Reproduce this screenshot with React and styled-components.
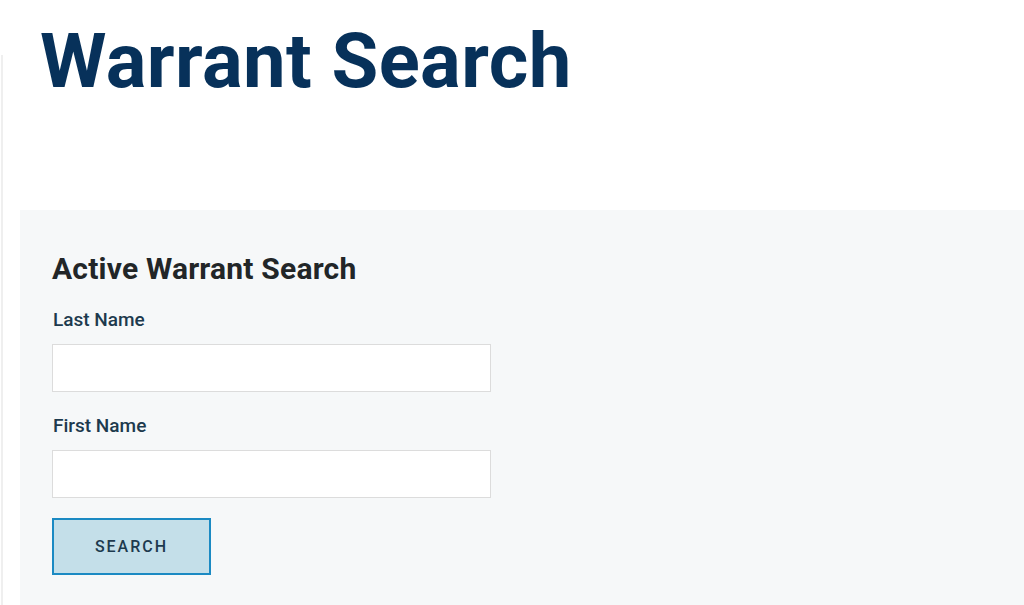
import React from 'react';
import styled, { createGlobalStyle } from 'styled-components';

const GlobalStyle = createGlobalStyle`
  html, body {
    margin: 0;
    padding: 0;
    background: #ffffff;
    font-family: "Roboto", "Liberation Sans", sans-serif;
  }
  * { box-sizing: border-box; }
`;

// Layout
const Page = styled.div`
  width: 1024px;
  height: 605px;
  overflow: hidden;
  position: relative;
  padding-left: 20px;
`;

const Rail = styled.div`
  position: absolute;
  left: 1px;
  top: 55px;
  bottom: 0;
  width: 2px;
  background: #efefef;
`;

const Title = styled.h1`
  margin: 0;
  padding: 16px 0 0 20px;
  height: 210px;
  font-family: "Roboto", "Liberation Sans", sans-serif;
  font-weight: 700;
  font-size: 76px;
  line-height: 90px;
  letter-spacing: 0.4px;
  color: #07315a;
`;

const Panel = styled.section`
  background: #f6f8f9;
  padding: 41px 32px 40px;
  height: 395px;
`;

const PanelHeading = styled.h2`
  margin: 0 0 22px;
  font-family: "Roboto", "Liberation Sans", sans-serif;
  font-weight: 700;
  font-size: 30px;
  line-height: 36px;
  letter-spacing: 0.2px;
  color: #222628;
`;

const Field = styled.div`
  display: flex;
  flex-direction: column;
  margin-bottom: ${p => p.$gap || 23}px;
`;

const Label = styled.label`
  font-size: 19px;
  line-height: 22px;
  font-weight: 500;
  color: #1d3a4e;
  margin-bottom: 13px;
  margin-left: 1px;
`;

const Input = styled.input`
  width: 439px;
  height: 48px;
  border: 1px solid #dcdcdc;
  background: #ffffff;
  font-size: 16px;
  padding: 0 12px;
  outline: none;
`;

const Button = styled.button`
  width: 159px;
  height: 57px;
  border: 2px solid #1b8ac3;
  background: #c4dfe9;
  color: #1d3a4e;
  font-family: "Roboto", "Liberation Sans", sans-serif;
  font-size: 16px;
  font-weight: 500;
  letter-spacing: 2px;
  cursor: pointer;
`;

export default function App() {
  return (
    <Page>
      <GlobalStyle />
      <Rail />
      <Title>Warrant Search</Title>
      <Panel>
        <PanelHeading>Active Warrant Search</PanelHeading>
        <Field>
          <Label htmlFor="last">Last Name</Label>
          <Input id="last" type="text" />
        </Field>
        <Field $gap={20}>
          <Label htmlFor="first">First Name</Label>
          <Input id="first" type="text" />
        </Field>
        <Button type="button">SEARCH</Button>
      </Panel>
    </Page>
  );
}
